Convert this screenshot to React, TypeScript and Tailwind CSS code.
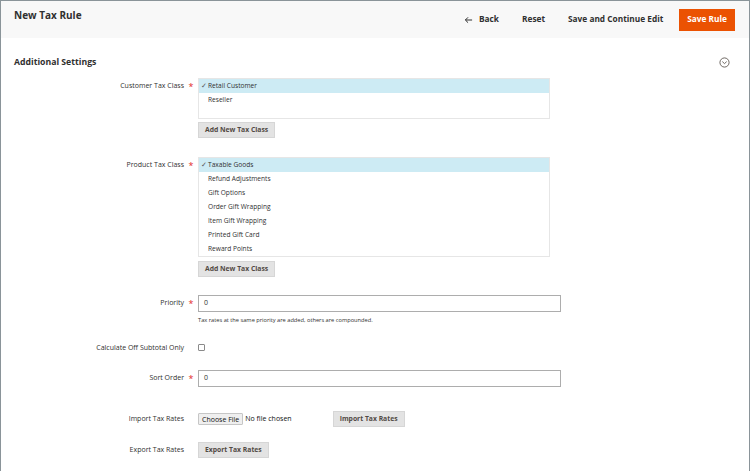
import React from 'react';

const font = { fontFamily: '"Open Sans", "Liberation Sans", sans-serif' };

const customerClasses = ['Retail Customer', 'Reseller'];
const productClasses = [
  'Taxable Goods',
  'Refund Adjustments',
  'Gift Options',
  'Order Gift Wrapping',
  'Item Gift Wrapping',
  'Printed Gift Card',
  'Reward Points',
];

const Label: React.FC<{ text: string; required?: boolean }> = ({ text, required }) => (
  <div className="flex w-[197px] shrink-0 items-center justify-end">
    <span className="text-[7px] text-[#303030]">{text}</span>
    <span className="w-[14px] text-center text-[9px] leading-none text-[#e22626]">{required ? '*' : ''}</span>
  </div>
);

const GrayButton: React.FC<{ children: React.ReactNode; className?: string }> = ({ children, className = '' }) => (
  <button
    className={`h-[16px] border border-[#d6d6d6] bg-[#e3e3e3] px-[6px] text-[6.8px] font-bold text-[#514943] ${className}`}
  >
    {children}
  </button>
);

const MultiSelect: React.FC<{ items: string[]; height: string }> = ({ items, height }) => (
  <div className={`w-[352px] border border-[#e6e6e6] bg-white ${height}`}>
    {items.map((item, i) => (
      <div
        key={item}
        className={`flex h-[14px] items-center text-[6.6px] text-[#303030] ${i === 0 ? 'bg-[#cdebf4] pl-[2px]' : 'pl-[9px]'}`}
      >
        {i === 0 && <span className="mr-[1px] text-[6.6px] text-[#555]">✓</span>}
        {item}
      </div>
    ))}
  </div>
);

export default function App() {
  return (
    <div className="h-[471px] w-[750px] overflow-hidden border-x border-t border-[#8a9499] bg-white" style={font}>
      {/* page header */}
      <div className="flex h-[37px] justify-between bg-[#f8f8f8] pl-[13px] pr-[14px]">
        <h1 className="pt-[7px] text-[10px] font-bold text-[#303030]">New Tax Rule</h1>
        <div className="flex items-center text-[8.3px] font-bold text-[#303030]">
          <span className="flex items-center">
            <svg width="9" height="8" viewBox="0 0 10 8" className="mr-[6px]">
              <path d="M9 4H1.5M4.5 1L1.5 4l3 3" fill="none" stroke="#303030" strokeWidth="1.1" />
            </svg>
            Back
          </span>
          <span className="ml-[23px]">Reset</span>
          <span className="ml-[23px]">Save and Continue Edit</span>
          <button className="ml-[16px] h-[22px] bg-[#eb5202] px-[8px] text-[8.3px] font-bold text-white">
            Save Rule
          </button>
        </div>
      </div>

      {/* section */}
      <div className="flex items-center justify-between pl-[13px] pr-[19px] pt-[18px]">
        <h2 className="text-[8.7px] font-bold text-[#303030]">Additional Settings</h2>
        <svg width="11" height="11" viewBox="0 0 12 12">
          <circle cx="6" cy="6" r="5" fill="none" stroke="#514943" strokeWidth="0.9" />
          <path d="M3.6 5L6 7.2 8.4 5" fill="none" stroke="#514943" strokeWidth="0.9" />
        </svg>
      </div>

      <div className="mt-[9px] flex">
        <div className="flex h-[16px] items-center">
          <Label text="Customer Tax Class" required />
        </div>
        <div className="flex flex-col items-start">
          <MultiSelect items={customerClasses} height="h-[41px]" />
          <GrayButton className="mt-[3px]">Add New Tax Class</GrayButton>
        </div>
      </div>

      <div className="mt-[19px] flex">
        <div className="flex h-[16px] items-center">
          <Label text="Product Tax Class" required />
        </div>
        <div className="flex flex-col items-start">
          <MultiSelect items={productClasses} height="h-[100px]" />
          <GrayButton className="mt-[4px]">Add New Tax Class</GrayButton>
        </div>
      </div>

      <div className="mt-[18px] flex">
        <div className="flex h-[17px] items-center">
          <Label text="Priority" required />
        </div>
        <div className="flex flex-col">
          <div className="flex h-[17px] w-[363px] items-center border border-[#adadad] px-[5px] text-[7px] text-[#303030]">0</div>
          <p className="mt-[4px] text-[5.7px] text-[#303030]">Tax rates at the same priority are added, others are compounded.</p>
        </div>
      </div>

      <div className="mt-[18px] flex items-center">
        <Label text="Calculate Off Subtotal Only" />
        <div className="h-[7px] w-[7px] rounded-[1px] border border-[#8a8a8a]" />
      </div>

      <div className="mt-[17px] flex items-center">
        <Label text="Sort Order" required />
        <div className="flex h-[17px] w-[363px] items-center border border-[#adadad] px-[5px] text-[7px] text-[#303030]">0</div>
      </div>

      <div className="mt-[24px] flex items-center">
        <Label text="Import Tax Rates" />
        <button className="h-[12px] rounded-[1px] border border-[#c6c6c6] bg-[#efefef] px-[3px] text-[7px] leading-none text-[#111]">
          Choose File
        </button>
        <span className="ml-[2px] text-[7px] text-[#111]">No file chosen</span>
        <GrayButton className="ml-[41px]">Import Tax Rates</GrayButton>
      </div>

      <div className="mt-[15px] flex items-center">
        <Label text="Export Tax Rates" />
        <GrayButton>Export Tax Rates</GrayButton>
      </div>
    </div>
  );
}
